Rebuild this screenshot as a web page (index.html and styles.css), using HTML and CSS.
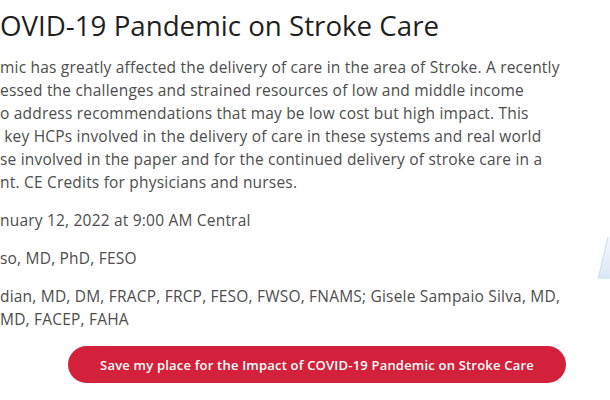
FILE: index.html
```html
<!DOCTYPE html>
<html lang="en">
<head>
<meta charset="utf-8">
<title>Impact of COVID-19 Pandemic on Stroke Care</title>
<link rel="stylesheet" href="styles.css">
</head>
<body>
<div class="page">
  <main class="content">
    <h1 class="title">OVID-19 Pandemic on Stroke Care</h1>
    <p class="text">mic has greatly affected the delivery of care in the area of Stroke. A recently<br>essed the challenges and strained resources of low and middle income<br>o address recommendations that may be low cost but high impact. This<br>&nbsp;key HCPs involved in the delivery of care in these systems and real world<br>se involved in the paper and for the continued delivery of stroke care in a<br>nt. CE Credits for physicians and nurses.</p>
    <p class="text">nuary 12, 2022 at 9:00 AM Central</p>
    <p class="text">so, MD, PhD, FESO</p>
    <p class="text">dian, MD, DM, FRACP, FRCP, FESO, FWSO, FNAMS; Gisele Sampaio Silva, MD,<br>MD, FACEP, FAHA</p>
    <div class="cta-row">
      <button class="cta">Save my place for the Impact of COVID-19 Pandemic on Stroke Care</button>
    </div>
  </main>
  <aside class="art">
    <svg class="art-svg" width="16" height="46" viewBox="0 0 16 46">
      <defs>
        <linearGradient id="g" x1="0" y1="0" x2="0" y2="1">
          <stop offset="0" stop-color="#f4f8fc"/>
          <stop offset="1" stop-color="#dae7f4"/>
        </linearGradient>
      </defs>
      <polygon points="12,0 16,0 16,42 2,42" fill="url(#g)"/>
      <line x1="12" y1="0" x2="2" y2="42" stroke="#cbdcef" stroke-width="1"/>
    </svg>
  </aside>
</div>
</body>
</html>
```
FILE: styles.css
```css
html, body {
  margin: 0;
  padding: 0;
  background: #ffffff;
}
body {
  width: 610px;
  height: 400px;
  overflow: hidden;
  font-family: "Open Sans", "Liberation Sans", sans-serif;
}
.page {
  display: flex;
  width: 610px;
}
.content {
  flex: 0 0 596px;
  padding-top: 7px;
}
.title {
  margin: 0 0 13px 0;
  font-size: 27.7px;
  line-height: 36px;
  font-weight: 400;
  color: #1f1f1f;
  letter-spacing: 0;
  white-space: nowrap;
}
.text {
  margin: 0 0 15px 0;
  font-size: 15.5px;
  line-height: 23px;
  color: #4d4d4d;
  letter-spacing: 0.2px;
  white-space: nowrap;
}
.cta-row {
  padding-left: 68px;
  padding-top: 0;
}
.cta {
  width: 498px;
  height: 37px;
  border: none;
  border-radius: 19px;
  background: #d3213b;
  color: #ffffff;
  font-family: "Open Sans", "Liberation Sans", sans-serif;
  font-size: 13px;
  font-weight: 600;
  letter-spacing: 0.2px;
  padding: 0;
}
.art {
  flex: 0 0 14px;
  padding-top: 237px;
}
.art-svg {
  display: block;
}
```
